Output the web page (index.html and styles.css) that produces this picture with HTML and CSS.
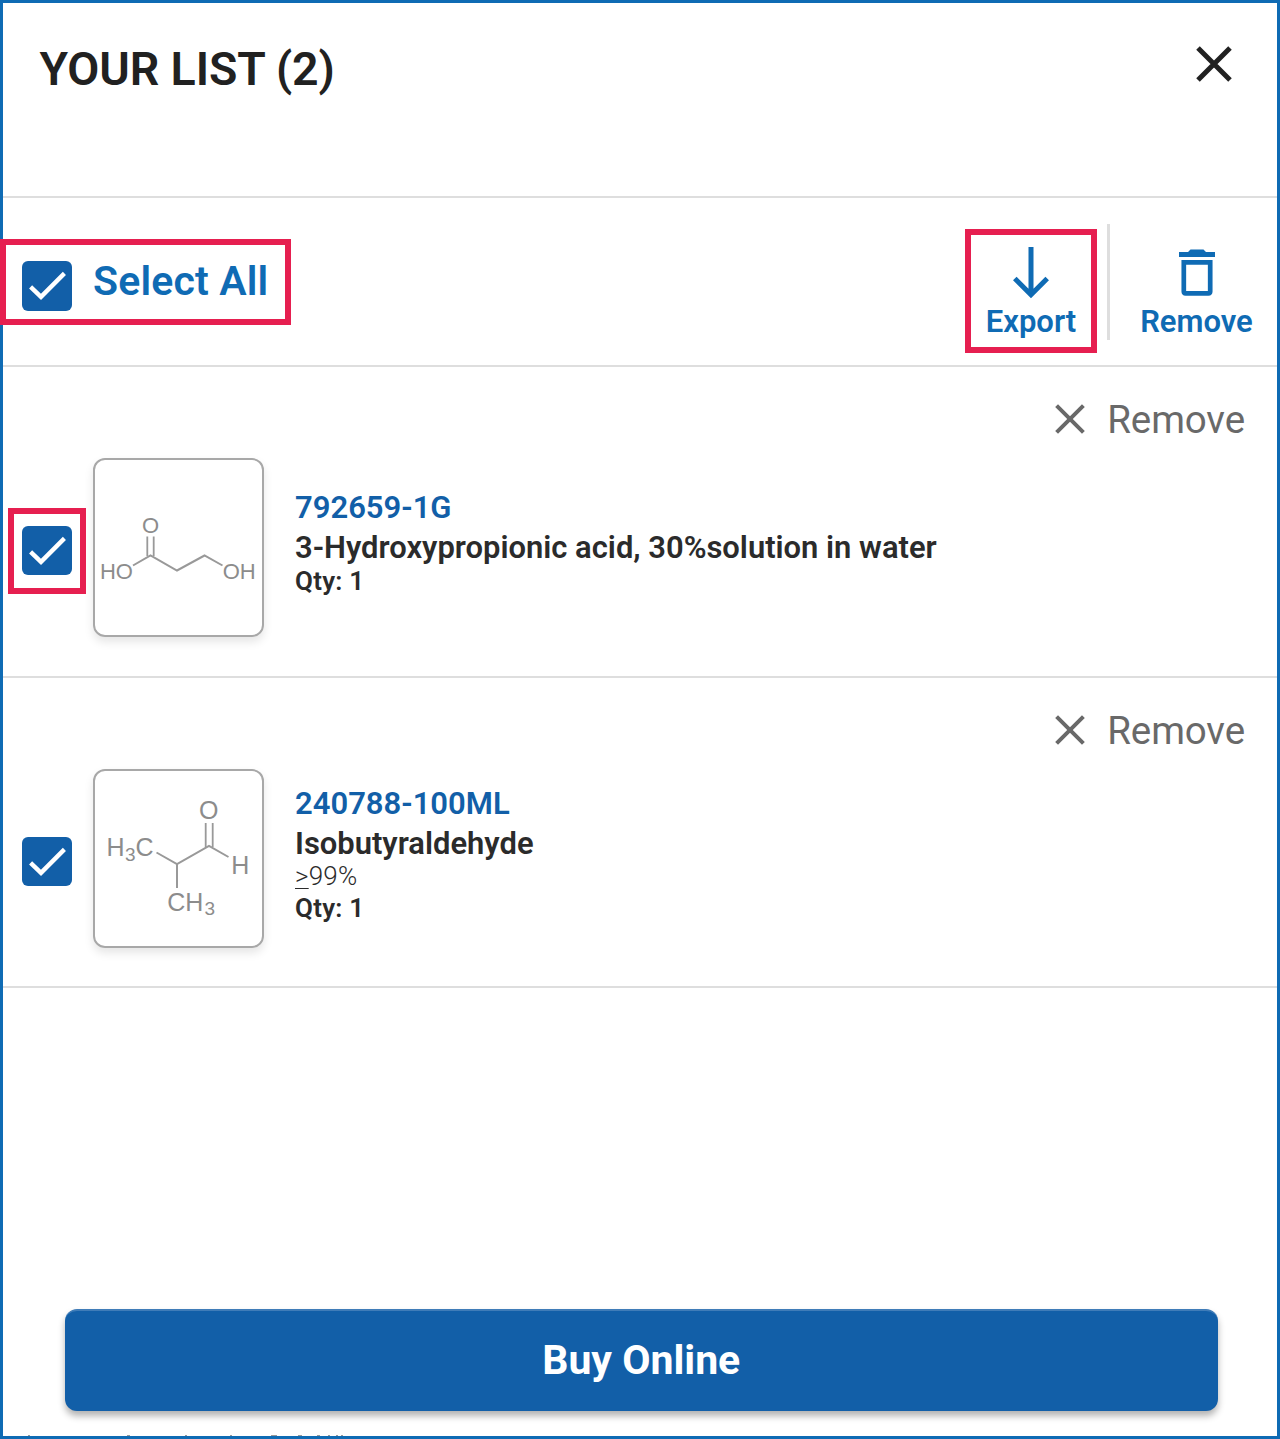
FILE: index.html
```html
<!DOCTYPE html>
<html lang="en">
<head>
<meta charset="utf-8">
<title>Your List</title>
<link rel="stylesheet" href="styles.css">
</head>
<body>
<svg width="0" height="0" class="defs" aria-hidden="true">
  <symbol id="check" viewBox="0 0 50 50"><path d="M8.6 25.8L19 35.8L42.4 12.4" fill="none" stroke="#fff" stroke-width="4.4"/></symbol>
  <symbol id="cross" viewBox="0 0 30 30"><path d="M1.6 1.6L28.4 28.4M28.4 1.6L1.6 28.4" fill="none" stroke="currentColor" stroke-width="4"/></symbol>
</svg>
<main class="panel">
  <header class="head">
    <h1 class="title">YOUR LIST (2)</h1>
    <button class="close" aria-label="Close"><svg width="36" height="36" viewBox="0 0 36 36"><path d="M2 2L34 34M34 2L2 34" fill="none" stroke="currentColor" stroke-width="5"/></svg></button>
  </header>

  <section class="toolbar">
    <label class="select-all">
      <span class="box"><svg><use href="#check"/></svg></span>
      <span class="select-text">Select All</span>
      <span class="mark mark-all"></span>
    </label>
    <div class="actions">
      <button class="action export">
        <svg width="36" height="52" viewBox="0 0 36 52"><path d="M18 0V48M1.8 31.5L18 47.7L34.2 31.5" fill="none" stroke="currentColor" stroke-width="5"/></svg>
        <span>Export</span>
        <span class="mark mark-export"></span>
      </button>
      <button class="action remove-all">
        <svg width="36" height="52" viewBox="0 0 36 52"><path d="M0 5H9L11.5 2.6H24.5L27 5H36V10H0Z" fill="currentColor"/><path d="M4.8 15.3H31.2V44.5Q31.2 46.3 29.4 46.3H6.6Q4.8 46.3 4.8 44.5Z" fill="none" stroke="currentColor" stroke-width="4.7"/></svg>
        <span>Remove</span>
      </button>
    </div>
  </section>

  <article class="item">
    <button class="remove"><svg width="30" height="30"><use href="#cross"/></svg><span>Remove</span></button>
    <div class="row">
      <span class="box item-box"><svg><use href="#check"/></svg><span class="mark mark-item"></span></span>
      <div class="card">
        <svg width="171" height="179" viewBox="0 0 171 179">
          <g stroke="#999" stroke-width="2" fill="none"><path d="M40 107.5L57.5 97.5L84 112.5L111.5 97.5L129.5 107.5"/><path d="M54.3 78.5V98M60.7 78.5V98" stroke-width="1.8"/></g>
          <g class="atoms"><text x="49" y="74.6">O</text><text x="6.9" y="120.8">HO</text><text x="129.7" y="120.8">OH</text></g>
        </svg>
      </div>
      <div class="details">
        <a class="code">792659-1G</a>
        <p class="name">3-Hydroxypropionic acid, 30%solution in water</p>
        <p class="qty">Qty: 1</p>
      </div>
    </div>
  </article>

  <article class="item">
    <button class="remove"><svg width="30" height="30"><use href="#cross"/></svg><span>Remove</span></button>
    <div class="row">
      <span class="box item-box"><svg><use href="#check"/></svg></span>
      <div class="card">
        <svg width="171" height="179" viewBox="0 0 171 179">
          <g stroke="#999" stroke-width="2" fill="none"><path d="M63.5 83.5L84 95L116 77L135.5 88M84 95V119"/><path d="M112.7 54V78M119.7 54V78" stroke-width="1.8"/></g>
          <g class="atoms big"><text x="106" y="50.2">O</text><text x="13.6" y="87.3">H</text><text x="32" y="91.5" class="sub">3</text><text x="42.6" y="87.3">C</text><text x="138.3" y="105.3">H</text><text x="74.3" y="142.3">CH</text><text x="111.5" y="146.3" class="sub">3</text></g>
        </svg>
      </div>
      <div class="details">
        <a class="code">240788-100ML</a>
        <p class="name">Isobutyraldehyde</p>
        <p class="purity"><u>&gt;</u>99%</p>
        <p class="qty">Qty: 1</p>
      </div>
    </div>
  </article>

  <footer class="foot">
    <button class="buy">Buy Online</button>
    <svg class="cutoff" width="330" height="1" viewBox="0 0 330 1"><path d="M4 .5h2M103 .5h3M161 .5h2M206 .5h2M247 .5h6M274 .5h4M293 .5h3M304 .5h2M312 .5h2M317 .5h2" stroke="#999" fill="none"/></svg>
  </footer>
</main>
</body>
</html>
```
FILE: styles.css
```css
* { box-sizing: border-box; }
body { margin: 0; background: #fff; font-family: Roboto, "Liberation Sans", sans-serif; color: #2b2b2b; }
h1, p { margin: 0; }
button { margin: 0; padding: 0; border: 0; background: none; font: inherit; color: inherit; }
svg { display: block; flex: none; }
.defs { position: absolute; }

.panel { width: 1280px; height: 1439px; border: 3px solid #0f6bb4; display: flex; flex-direction: column; }

.head { flex: none; height: 195px; border-bottom: 2px solid #dedede; display: flex; justify-content: space-between; align-items: flex-start; padding: 38px 45px 0 36.5px; }
.title { font-size: 46.5px; line-height: 56px; font-weight: 600; letter-spacing: -0.1px; color: #212121; white-space: nowrap; }
.close { color: #212121; margin-top: 5px; }

.toolbar { flex: none; height: 169px; border-bottom: 2px solid #dedede; display: flex; justify-content: space-between; color: #0f6bb4; }
.select-all { position: relative; display: flex; align-items: flex-start; gap: 21px; padding: 63px 0 0 19px; }
.select-text { font-size: 41px; line-height: 48px; font-weight: 600; letter-spacing: 0.15px; margin-top: -4px; white-space: nowrap; }
.box { position: relative; flex: none; width: 50px; height: 49.5px; border-radius: 6px; background: #125fa8; }
.box svg { width: 50px; height: 50px; }
.mark { position: absolute; border: 6px solid #e61f50; pointer-events: none; }
.mark-all { left: -3px; top: 41px; width: 291px; height: 86px; }
.mark-export { left: 10px; top: 5px; width: 132px; height: 124px; }
.mark-item { left: -14px; top: -18px; width: 78px; height: 86px; }

.actions { display: flex; padding-top: 26px; }
.action { position: relative; display: flex; flex-direction: column; align-items: center; justify-content: flex-start; gap: 5px; font-size: 31px; line-height: 36px; font-weight: 600; white-space: nowrap; height: 116px; padding-top: 23px; }
.export { width: 155px; border-right: 3px solid #dedede; }
.remove-all { width: 167px; padding-left: 6px; }

.item { flex: none; height: 311px; border-bottom: 2px solid #dedede; padding: 30px 32px 0 19px; }
.item + .item { height: 310px; }
.remove { display: flex; align-items: center; gap: 22px; margin-left: auto; height: 46px; color: #696969; font-size: 38.5px; line-height: 46px; white-space: nowrap; }
.remove span { letter-spacing: -0.1px; }
.remove svg { margin-bottom: 2px; }
.row { display: flex; align-items: center; margin-top: 15px; }
.item-box { margin-top: 6px; }
.card { width: 171px; height: 179px; margin-left: 21px; border: 2px solid #a8a8a8; border-radius: 12px; box-shadow: 0 5px 10px rgba(0,0,0,.1); }
.card svg { margin: -2px; }
.atoms { font: 22px "Liberation Sans", Arial, sans-serif; fill: #8c8c8c; }
.big { font-size: 25px; }
.atoms .sub { font-size: 19px; }
.details { margin-left: 31px; padding-bottom: 12px; white-space: nowrap; }
.code { display: block; font-size: 31px; line-height: 43px; font-weight: 600; color: #125fa8; }
.name { font-size: 30.95px; line-height: 34px; padding-top: 2px; font-weight: 600; }
.purity { font-size: 26px; line-height: 31px; font-weight: 300; letter-spacing: 0.2px; }
.purity u { text-decoration-thickness: 1px; text-underline-offset: 3px; }
.qty { font-size: 26px; line-height: 32px; font-weight: 600; letter-spacing: 0.25px; }

.foot { margin-top: auto; padding: 0 59px 0 61.5px; }
.buy { display: block; width: 100%; height: 102px; border-radius: 12px; border-top: 2px solid #3f7cb8; padding-bottom: 3px; background: #125fa8; color: #fff; font-size: 41px; font-weight: 700; box-shadow: 0 5px 7px rgba(0,0,0,.3); }
.cutoff { margin: 24px 0 0 -41px; }
```
